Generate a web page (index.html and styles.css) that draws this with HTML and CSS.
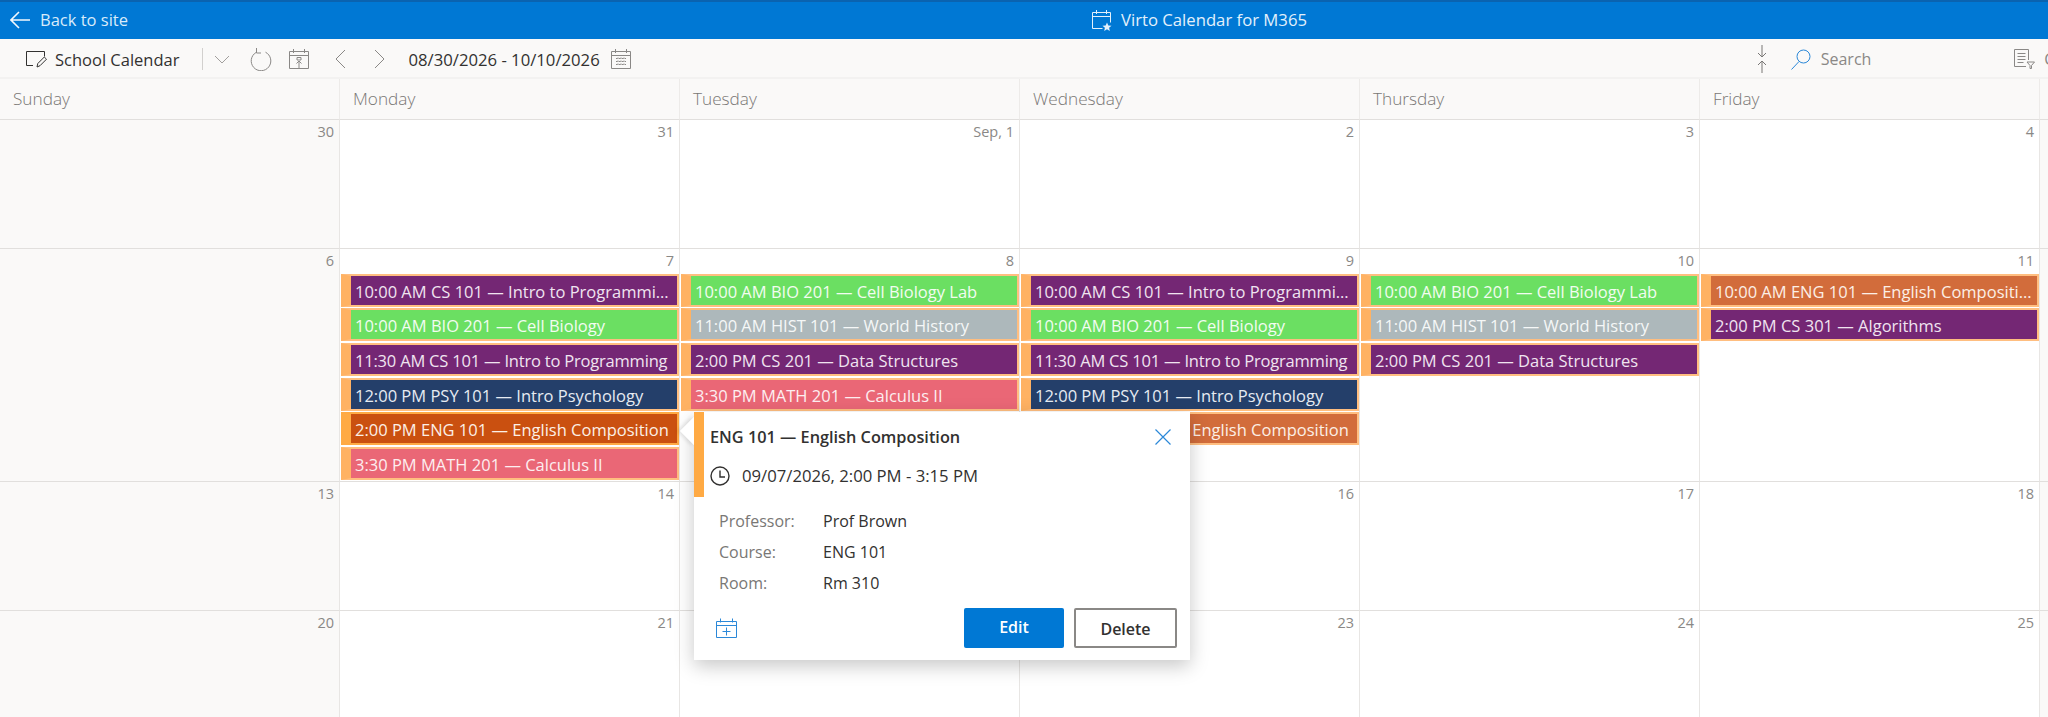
FILE: index.html
```html
<!DOCTYPE html>
<html lang="en">
<head>
    <meta charset="UTF-8">
    <title>Virto Calendar for M365</title>
    <link rel="stylesheet" href="styles.css">
</head>
<body>
<div class="app">
    <!-- top bar -->
    <div class="topbar">
        <a class="back-link" href="#">
            <svg class="back-icon" width="20" height="18" viewBox="0 0 20 18"><path d="M9 1 1 9l8 8M1 9h19"/></svg>
            <span>Back to site</span>
        </a>
        <div class="app-title">
            <svg class="title-icon" width="20" height="22" viewBox="0 0 20 22"><path d="M.5 3.5h18v10M.5 3.5v16h10M.5 7.5h18M4.5 1v4M14.5 1v4"/><path class="star" d="m15 13.5 1.3 2.9 3.2.3-2.4 2.1.7 3.1-2.8-1.600-2.800 1.600.700-3.100-2.400-2.100 3.200-.300z"/></svg>
            <span>Virto Calendar for M365</span>
        </div>
    </div>

    <!-- toolbar -->
    <div class="toolbar">
        <svg class="tool-icon dark calendar-edit" width="22" height="22" viewBox="0 0 22 22"><path d="M8 17.500H1.500v-14h18v5"/><path d="m12 19 .8-3.500 6.500-6.500 2.200 2.200-6.500 6.500z"/></svg>
        <span class="calendar-name">School Calendar</span>
        <span class="tool-sep"></span>
        <svg class="tool-icon chevron-down" width="16" height="9" viewBox="0 0 16 9"><path d="m1 1 7 7 7-7"/></svg>
        <svg class="tool-icon refresh" width="22" height="24" viewBox="0 0 22 24"><path d="M6 5.500a9.800 9.800 0 1 0 9.500-.300M6.500 1v5H11"/></svg>
        <svg class="tool-icon today" width="20" height="22" viewBox="0 0 20 22"><path d="M.5 3.500h19v17H.5zM.5 7.500h19M4.500 1v4M15.500 1v4"/><path d="M10 20v-7M7.500 15.500 10 13l2.500 2.500M8 9.500h4V12H8z"/></svg>
        <svg class="tool-icon prev" width="12" height="20" viewBox="0 0 12 20"><path d="M11 1 2 10l9 9"/></svg>
        <svg class="tool-icon next" width="12" height="20" viewBox="0 0 12 20"><path d="m1 1 9 9-9 9"/></svg>
        <span class="date-range">08/30/2026 - 10/10/2026</span>
        <svg class="tool-icon range-cal" width="20" height="22" viewBox="0 0 20 22"><path d="M.5 3.500h19v17H.5zM.5 7.500h19M4.500 1v4M15.500 1v4"/><path class="dots" d="M5 10.500h10M5 13.500h10M5 16.500h10M7 9.500v9M10 9.500v9M13 9.500v9"/></svg>
        <svg class="tool-icon collapse" width="10" height="28" viewBox="0 0 10 28"><path d="M5 0v12M1 8l4 4 4-4M5 28V16M1 20l4-4 4 4"/></svg>
        <svg class="tool-icon search-icon" width="20" height="21" viewBox="0 0 20 21"><circle cx="12.500" cy="7.500" r="6.500"/><path d="M8 12.500.5 20.500"/></svg>
        <span class="search-text">Search</span>
        <svg class="tool-icon filter" width="21" height="20" viewBox="0 0 21 20"><path d="M12 17.500H.5V.5h14V11M3.500 4.500h8M3.500 7.500h8M3.500 10.500h8M3.500 13.500h6"/><path d="M13 13h7.500l-3 3.500v3h-1.500v-3z"/></svg>
        <span class="filter-text">Calendars</span>
    </div>

    <!-- month grid -->
    <div class="week-header">
        <div>Sunday</div><div>Monday</div><div>Tuesday</div><div>Wednesday</div><div>Thursday</div><div>Friday</div><div></div>
    </div>
    <div class="month">
        <div class="day off"><div class="num">30</div></div>
        <div class="day"><div class="num">31</div></div>
        <div class="day"><div class="num">Sep, 1</div></div>
        <div class="day"><div class="num">2</div></div>
        <div class="day"><div class="num">3</div></div>
        <div class="day"><div class="num">4</div></div>
        <div class="day off"></div>

        <div class="day off"><div class="num">6</div></div>
        <div class="day">
            <div class="num">7</div>
            <div class="event purple">10:00 AM CS 101 — Intro to Programming</div>
            <div class="event green">10:00 AM BIO 201 — Cell Biology</div>
            <div class="event purple tight">11:30 AM CS 101 — Intro to Programming</div>
            <div class="event navy">12:00 PM PSY 101 — Intro Psychology</div>
            <div class="event orange selected">2:00 PM ENG 101 — English Composition</div>
            <div class="event coral">3:30 PM MATH 201 — Calculus II</div>
        </div>
        <div class="day">
            <div class="num">8</div>
            <div class="event green">10:00 AM BIO 201 — Cell Biology Lab</div>
            <div class="event gray">11:00 AM HIST 101 — World History</div>
            <div class="event purple">2:00 PM CS 201 — Data Structures</div>
            <div class="event coral">3:30 PM MATH 201 — Calculus II</div>
        </div>
        <div class="day">
            <div class="num">9</div>
            <div class="event purple">10:00 AM CS 101 — Intro to Programming</div>
            <div class="event green">10:00 AM BIO 201 — Cell Biology</div>
            <div class="event purple tight">11:30 AM CS 101 — Intro to Programming</div>
            <div class="event navy">12:00 PM PSY 101 — Intro Psychology</div>
            <div class="event orange">2:00 PM ENG 101 — English Composition</div>
        </div>
        <div class="day">
            <div class="num">10</div>
            <div class="event green">10:00 AM BIO 201 — Cell Biology Lab</div>
            <div class="event gray">11:00 AM HIST 101 — World History</div>
            <div class="event purple">2:00 PM CS 201 — Data Structures</div>
        </div>
        <div class="day">
            <div class="num">11</div>
            <div class="event orange">10:00 AM ENG 101 — English Composition</div>
            <div class="event purple">2:00 PM CS 301 — Algorithms</div>
        </div>
        <div class="day off"></div>

        <div class="day off"><div class="num">13</div></div>
        <div class="day"><div class="num">14</div></div>
        <div class="day"><div class="num">15</div></div>
        <div class="day"><div class="num">16</div></div>
        <div class="day"><div class="num">17</div></div>
        <div class="day"><div class="num">18</div></div>
        <div class="day off"></div>

        <div class="day off"><div class="num">20</div></div>
        <div class="day"><div class="num">21</div></div>
        <div class="day"><div class="num">22</div></div>
        <div class="day"><div class="num">23</div></div>
        <div class="day"><div class="num">24</div></div>
        <div class="day"><div class="num">25</div></div>
        <div class="day off"></div>
    </div>

    <!-- event popup -->
    <div class="popup">
        <div class="popup-arrow"></div>
        <div class="popup-inner">
            <div class="popup-head">
                <div class="popup-title">
                    <span>ENG 101 — English Composition</span>
                    <svg class="close-icon" width="16" height="16" viewBox="0 0 16 16"><path d="m.5.5 15 15M15.500.5l-15 15"/></svg>
                </div>
                <div class="popup-time">
                    <svg class="clock-icon" width="20" height="20" viewBox="0 0 20 20"><circle cx="10" cy="10" r="9"/><path d="M10 4.500V11h5"/></svg>
                    <span>09/07/2026, 2:00 PM - 3:15 PM</span>
                </div>
            </div>
            <div class="popup-fields">
                <div class="field-label">Professor:</div><div class="field-value">Prof Brown</div>
                <div class="field-label">Course:</div><div class="field-value">ENG 101</div>
                <div class="field-label">Room:</div><div class="field-value">Rm 310</div>
            </div>
            <div class="popup-foot">
                <svg class="add-icon" width="21" height="20" viewBox="0 0 21 20"><path d="M.5 3.500h20v16H.5zM.5 7.500h20M4.500 .5v4M16.500 .5v4M10.500 9.500v8M6.500 13.500h8"/></svg>
                <a class="btn btn-edit" href="#">Edit</a>
                <a class="btn btn-delete" href="#">Delete</a>
            </div>
        </div>
    </div>
</div>
</body>
</html>
```

FILE: styles.css
```css
* {
    margin: 0;
    padding: 0;
    box-sizing: border-box;
}
html, body {
    height: 100%;
    overflow: hidden;
}
body {
    font-family: "Open Sans", "Noto Sans", sans-serif;
    font-size: 16px;
    color: #323130;
    background-color: #fff;
}
a {
    text-decoration: none;
}
svg {
    display: block;
    flex: none;
    fill: none;
    stroke: currentColor;
    stroke-width: 1;
}
.app {
    position: relative;
    width: 2048px;
    height: 717px;
    overflow: hidden;
}

/* top bar */
.topbar {
    display: flex;
    align-items: center;
    height: 39px;
    padding: 0 0 2px 10px;
    background-color: #0078d4;
    border-top: 2px solid #0a63b0;
    color: #e3f0fb;
}
.back-link {
    display: flex;
    align-items: center;
    gap: 10px;
    width: 1082px;
    color: #d9ebfa;
    font-size: 16.500px;
}
.back-icon {
    stroke: #f2f8fd;
    stroke-width: 1.600;
}
.app-title {
    display: flex;
    align-items: center;
    gap: 9px;
    font-size: 16.700px;
}
.star {
    fill: #e3f0fb;
    stroke: none;
}

/* toolbar */
.toolbar {
    display: flex;
    align-items: center;
    height: 40px;
    padding: 2px 0 0 25px;
    background-color: #faf9f8;
    border-bottom: 2px solid #f3f2f1;
    white-space: nowrap;
}
.tool-icon {
    color: #8a8886;
}
.tool-icon.dark {
    color: #323130;
}
.calendar-name {
    margin-left: 8px;
    font-size: 16.500px;
}
.tool-sep {
    flex: none;
    width: 1px;
    height: 22px;
    margin-left: 22px;
    background-color: #d2d0ce;
}
.chevron-down { margin-left: 11px; color: #a19f9d; }
.refresh { margin-left: 20px; }
.today { margin-left: 17px; }
.prev { margin-left: 25px; }
.next { margin-left: 28px; }
.date-range {
    margin-left: 23px;
    font-size: 16.700px;
}
.range-cal { margin-left: 11px; }
.dots { stroke-dasharray: 1.500 1.500; }
.collapse { margin-left: 1126px; color: #797775; }
.search-icon { margin-left: 24px; color: #2b88d8; }
.search-text {
    margin-left: 10px;
    font-size: 16px;
    color: #8a8886;
}
.filter { margin-left: 143px; }
.filter-text {
    margin-left: 9px;
    color: #8a8886;
}

/* month grid */
.week-header,
.month {
    display: grid;
    grid-template-columns: repeat(7, 340px);
}
.week-header > div {
    height: 41px;
    padding: 8px 0 0 13px;
    font-size: 17.200px;
    font-weight: 300;
    color: #797775;
    background-color: #faf9f8;
    border-right: 1px solid #edebe9;
    border-bottom: 1px solid #e1dfdd;
}
.month {
    grid-template-rows: 129px 233px 129px 129px;
}
.day {
    min-width: 0;
    border-right: 1px solid #e8e6e4;
    border-bottom: 1px solid #e1dfdd;
}
.day.off {
    background-color: #faf9f8;
}
.num {
    height: 24.500px;
    padding: 2px 5px 0 0;
    text-align: right;
    font-size: 14.500px;
    color: #8a8886;
}
.event {
    height: 33px;
    margin: 0 0 1.700px 1px;
    padding: 0 3px 0 4px;
    overflow: hidden;
    white-space: nowrap;
    text-overflow: ellipsis;
    line-height: 32px;
    font-size: 16.500px;
    color: #fff;
    border: 2px solid #ffbe80;
    border-left: 10px solid #ffb263;
}
.event.tight {
    letter-spacing: -.2px;
}
.purple { background-color: #742774; color: #f0e4f0; }
.green { background-color: #6bdf62; color: #f2fcf1; }
.gray { background-color: #adb8bb; color: #f5f7f7; }
.navy { background-color: #243f6a; color: #e6ebf2; }
.coral { background-color: #ea6776; color: #fdeef0; }
.orange { background-color: #d26c3b; color: #fcefe6; }
.selected {
    background-color: #ca5010;
    border-color: #ffaa44;
}

/* event popup */
.popup {
    position: absolute;
    left: 694px;
    top: 412px;
    width: 496px;
    height: 248px;
    background-color: #fff;
    box-shadow: 0 6px 18px rgba(0, 0, 0, .22);
}
.popup-arrow {
    position: absolute;
    left: -10px;
    top: 9px;
    width: 20px;
    height: 20px;
    background-color: #fff;
    box-shadow: -2px 2px 4px rgba(0, 0, 0, .1);
    transform: rotate(45deg);
}
.popup-inner {
    position: relative;
    height: 100%;
    background-color: #fff;
}
.popup-head {
    height: 85px;
    padding: 12px 0 0 6px;
    border-left: 10px solid #ffaa44;
}
.popup-title {
    display: flex;
    align-items: center;
    justify-content: space-between;
    padding-right: 19px;
    height: 26px;
    font-size: 16.300px;
    font-weight: 600;
}
.close-icon {
    color: #2b88d8;
    stroke-width: 1.200;
}
.popup-time {
    display: flex;
    align-items: center;
    gap: 12px;
    margin-top: 14px;
    font-size: 16.700px;
}
.clock-icon {
    stroke-width: 1.400;
}
.popup-fields {
    display: grid;
    grid-template-columns: 104px 1fr;
    grid-auto-rows: 31px;
    margin: 9px 0 0 25px;
    font-size: 16px;
    line-height: 31px;
}
.field-label {
    color: #797775;
}
.popup-foot {
    display: flex;
    align-items: center;
    position: absolute;
    left: 22px;
    right: 13px;
    bottom: 12px;
    height: 40px;
    font-weight: 600;
}
.add-icon {
    margin-right: auto;
    color: #2b88d8;
}
.btn {
    height: 40px;
    line-height: 38px;
    text-align: center;
    border-radius: 2px;
    font-size: 16px;
}
.btn-edit {
    width: 100px;
    margin-right: 10px;
    background-color: #0078d4;
    color: #fff;
}
.btn-delete {
    width: 103px;
    color: #323130;
    border: 2px solid #8a8886;
}
```
